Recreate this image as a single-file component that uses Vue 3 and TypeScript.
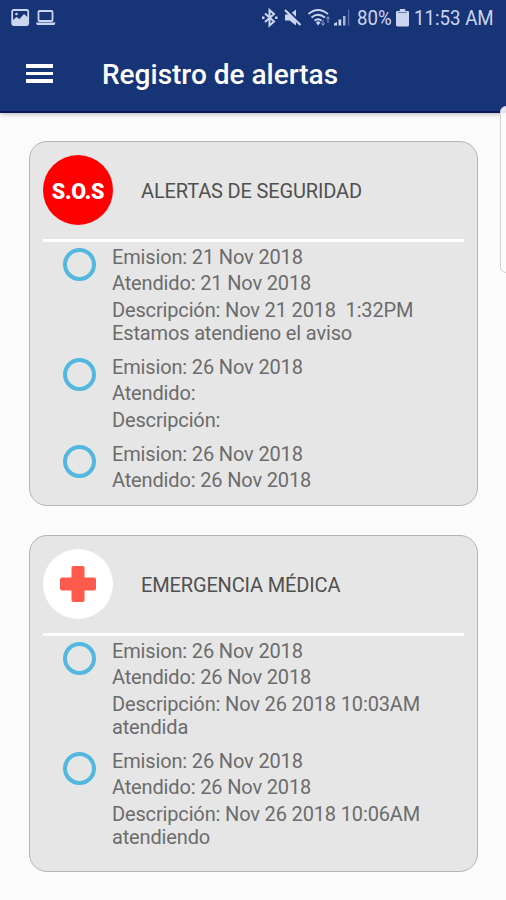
<script setup lang="ts">
interface Entry {
  id: number
  issued: string
  attended: string
  description?: string
}

interface AlertGroup {
  kind: 'security' | 'medical'
  title: string
  entries: Entry[]
}

const groups: AlertGroup[] = [
  {
    kind: 'security',
    title: 'ALERTAS DE SEGURIDAD',
    entries: [
      { id: 1, issued: '21 Nov 2018', attended: '21 Nov 2018', description: 'Nov 21 2018  1:32PM\nEstamos atendieno el aviso' },
      { id: 2, issued: '26 Nov 2018', attended: '', description: '' },
      { id: 3, issued: '26 Nov 2018', attended: '26 Nov 2018' },
    ],
  },
  {
    kind: 'medical',
    title: 'EMERGENCIA MÉDICA',
    entries: [
      { id: 4, issued: '26 Nov 2018', attended: '26 Nov 2018', description: 'Nov 26 2018 10:03AM\natendida' },
      { id: 5, issued: '26 Nov 2018', attended: '26 Nov 2018', description: 'Nov 26 2018 10:06AM\natendiendo' },
    ],
  },
]
</script>

<template>
  <div class="screen">
    <header class="top">
      <div class="status">
        <svg class="left-icons" width="46" height="18" viewBox="0 0 46 18">
          <rect x="1.200" y="1" width="16" height="15" rx="1.500" fill="none" stroke="#cbd5ef" stroke-width="1.800" />
          <path d="M2 11l3.500-3 3 2 4.500-5 4 3.500V15H2z" fill="#cbd5ef" />
          <circle cx="5.500" cy="5" r="1.300" fill="#cbd5ef" />
          <rect x="27.500" y="2" width="14" height="10" rx="1" fill="none" stroke="#cbd5ef" stroke-width="1.800" />
          <path d="M25 13.500h19.500l-1 2.500h-17.500z" fill="#cbd5ef" />
        </svg>
        <svg class="right-icons" width="92" height="20" viewBox="0 0 92 20">
          <g fill="none" stroke="#cbd5ef" stroke-width="2">
            <path d="M4 5.500l9 8-4.500 4V2l4.500 4-9 8" />
            <path d="M1 9.700h2.500M14 9.700h2.500" stroke-width="2.400" />
          </g>
          <path d="M24 6.500h4.500l6.500-5v16l-6.500-5H24z" fill="#cbd5ef" />
          <path d="M25.500 1l15.500 15" stroke="#173477" stroke-width="2.200" />
          <path d="M24 2l15.500 15" stroke="#cbd5ef" stroke-width="2.200" />
          <g fill="none" stroke="#cbd5ef" stroke-width="1.900">
            <path d="M47.500 6q9.500-8 19.500 0M50.500 9.500q6.500-5.500 13.500 0M53.500 12.800q3.500-3 7 0" />
          </g>
          <path d="M55 14.500l2-1.500 2.500 1.500-2.500 3z" fill="#cbd5ef" />
          <path d="M62 12v5M60.300 15.300l1.700 2 1.700-2M67 15V9M65.400 10.700l1.600-2 1.600 2" fill="none" stroke="#8fa0cb" stroke-width="1" />
          <path d="M73 15.500l3-1.500v3.500h-3zM77.500 11.500h2.700v6h-2.700z" fill="#cbd5ef" />
          <path d="M82 8h2.500v9.500H82z" fill="#a4b2d6" />
          <path d="M87 1.500h1.200v16H87z" fill="#5e73ab" />
        </svg>
        <span class="percent"><b>80%</b></span>
        <svg class="battery" width="13" height="18" viewBox="0 0 12 18" preserveAspectRatio="none">
          <path d="M3.500 0h5v2H11q1 0 1 1v13q0 1.500-1.500 1.500h-9Q0 17.500 0 16V3q0-1 1-1h2.500z" fill="#cbd5ef" />
          <path d="M2 3.500h8" stroke="#6679ad" stroke-width="1" />
        </svg>
        <span class="clock"><b>11:53 AM</b></span>
      </div>
      <div class="appbar">
        <button class="menu" aria-label="Menú"><i></i><i></i><i></i></button>
        <h1>Registro de alertas</h1>
      </div>
    </header>

    <main>
      <section v-for="group in groups" :key="group.kind" class="card" :class="group.kind">
        <div class="card-head">
          <div class="badge">
            <span v-if="group.kind === 'security'">S.O.S</span>
            <svg v-else width="36" height="36" viewBox="0 0 36 36">
              <path d="M13.500 0h9q2 0 2 2v9.500H34q2 0 2 2v9q0 2-2 2h-9.500V34q0 2-2 2h-9q-2 0-2-2v-9.500H2q-2 0-2-2v-9q0-2 2-2h9.500V2q0-2 2-2z" fill="#ff5b4c" />
            </svg>
          </div>
          <h2>{{ group.title }}</h2>
        </div>
        <ul>
          <li v-for="entry in group.entries" :key="entry.id">
            <span class="ring"></span>
            <div class="lines">
              <p>Emision: {{ entry.issued }}</p>
              <p>Atendido: {{ entry.attended }}</p>
              <p v-if="entry.description !== undefined">Descripción: {{ entry.description }}</p>
            </div>
          </li>
        </ul>
      </section>
    </main>
    <div class="edge-handle"></div>
  </div>
</template>

<style>
body {
  margin: 0;
}
</style>

<style scoped>
.screen {
  position: relative;
  width: 506px;
  height: 900px;
  overflow: hidden;
  background: #fbfbfb;
  font-family: Roboto, "Liberation Sans", sans-serif;
}
.top {
  height: 113px;
  box-sizing: border-box;
  background: #173477;
  border-bottom: 2px solid #0b1758;
  box-shadow: 0 1px 5px rgba(0, 0, 0, 0.28);
}
.status {
  display: flex;
  align-items: center;
  height: 36px;
  padding: 0 12px 0 11px;
  color: #cbd5ef;
  font-size: 21px;
  white-space: nowrap;
}
.status > * {
  flex: none;
}
.status b {
  display: inline-block;
  font-weight: 400;
  transform: scaleX(0.89);
  transform-origin: left center;
}
.right-icons {
  margin-left: auto;
}
.percent {
  width: 39px;
  margin-left: 4px;
}
.battery {
  margin-right: 5px;
}
.clock {
  width: 80px;
}
.appbar {
  display: flex;
  align-items: center;
  height: 77px;
  padding-left: 26px;
}
.menu {
  display: flex;
  flex-direction: column;
  gap: 4px;
  width: 27px;
  margin: 0 49px 2px 0;
  padding: 0;
  border: 0;
  background: none;
}
.menu i {
  height: 3.500px;
  background: #fff;
}
h1 {
  margin: 0;
  color: #fff;
  font-size: 28px;
  font-weight: 500;
  line-height: 32px;
}
main {
  display: flex;
  flex-direction: column;
  gap: 29px;
  padding: 28px 28px 0 29px;
}
.card {
  box-sizing: border-box;
  overflow: hidden;
  padding: 0 13px;
  border: 1px solid #b4b4b4;
  border-radius: 18px;
  background: #e6e6e6;
}
.security {
  height: 365px;
}
.medical {
  height: 337px;
}
.card-head {
  display: flex;
  align-items: flex-start;
  gap: 28px;
  box-sizing: border-box;
  height: 100px;
  padding-top: 13px;
  border-bottom: 3px solid #fff;
}
.badge {
  display: grid;
  place-items: center;
  width: 70px;
  height: 70px;
  border-radius: 50%;
  background: #fff;
}
.security .badge {
  background: #f00;
}
.badge span {
  padding-top: 3px;
  color: #fff;
  font-size: 21.500px;
  font-weight: 900;
  letter-spacing: -0.200px;
  line-height: 26px;
}
h2 {
  margin: 0;
  color: #505050;
  font-size: 20px;
  font-weight: 400;
  letter-spacing: -0.150px;
  line-height: 73px;
}
ul {
  display: flex;
  flex-direction: column;
  gap: 10.700px;
  margin: 0;
  padding: 3.600px 0 0 20px;
  list-style: none;
}
li {
  display: flex;
  gap: 16px;
}
.ring {
  flex: none;
  box-sizing: border-box;
  width: 33px;
  height: 33px;
  margin-top: 2.700px;
  border: 4px solid #53b8df;
  border-radius: 50%;
}
.lines {
  display: flex;
  flex-direction: column;
  gap: 3.700px;
}
.lines p {
  margin: 0;
  color: #6c6c6c;
  font-size: 20px;
  letter-spacing: -0.150px;
  line-height: 23px;
  min-height: 23px;
  white-space: pre;
}
.edge-handle {
  position: absolute;
  top: 106px;
  left: 500px;
  box-sizing: border-box;
  width: 12px;
  height: 167px;
  border: 1px solid #d2d2d2;
  border-radius: 6px;
  background: rgba(252, 252, 252, 0.9);
}
</style>
